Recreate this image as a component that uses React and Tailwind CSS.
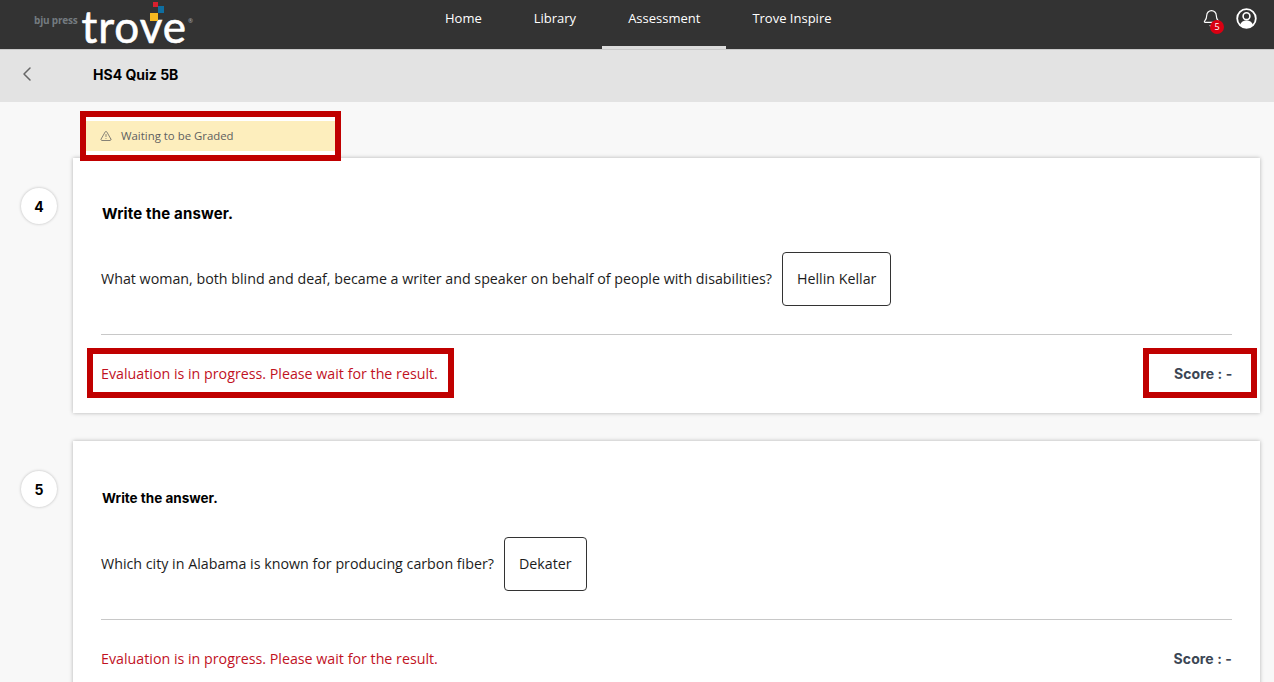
import { Bell, ChevronLeft, TriangleAlert } from "lucide-react";

const OPEN = "font-['Open_Sans',sans-serif]";
const HEAD = "font-['Inter',sans-serif]";

const NAV = [
  { label: "Home" },
  { label: "Library" },
  { label: "Assessment", active: true },
  { label: "Trove Inspire" },
];

function Logo() {
  return (
    <div className="relative flex w-[419px] items-center pl-[34px]">
      <span className={`${OPEN} mt-[-8px] text-[10px] font-bold tracking-[-0.2px] text-[#747b80]`}>bju press</span>
      <span className="ml-[4px] mt-[2px] font-['Lato',sans-serif] text-[44px] leading-[44px] tracking-[1px] text-white [-webkit-text-stroke:0.6px_white]">trove</span>
      <span className="ml-[1px] mt-[-6px] text-[6px] text-[#aaa]">®</span>
      <svg className="absolute left-[148px] top-0" width="20" height="24" viewBox="0 0 20 24">
        <rect x="5" y="2" width="5" height="5" fill="#d8202f" />
        <rect x="10" y="6" width="6" height="7" fill="#0f6ea0" />
        <rect x="2" y="13" width="8" height="8" fill="#f5b921" />
      </svg>
    </div>
  );
}

function Header() {
  return (
    <header className="flex h-[50px] items-stretch border-b border-[#c9c9c9] bg-[#333333]">
      <Logo />
      <nav className={`${OPEN} flex text-[13px] font-medium text-white`}>
        {NAV.map((item) => (
          <a
            key={item.label}
            className={`h-[49px] border-b-[3px] px-[26px] pt-[9px] ${item.active ? "border-[#dcdcdc]" : "border-transparent"}`}
          >
            {item.label}
          </a>
        ))}
      </nav>
      <div className="ml-auto flex items-start gap-[15px] pr-[17px] pt-[8px]">
        <div className="relative mt-[1px]">
          <Bell size={19} strokeWidth={1.5} className="text-white" />
          <span className={`${OPEN} absolute left-[8px] top-[11px] flex h-[14px] w-[14px] items-center justify-center rounded-full bg-[#d90012] text-[9px] text-white`}>
            5
          </span>
        </div>
        <svg width="21" height="21" viewBox="0 0 21 21">
          <circle cx="10.5" cy="10.5" r="9.3" fill="none" stroke="white" strokeWidth="1.8" />
          <circle cx="10.5" cy="8.2" r="3.4" fill="none" stroke="white" strokeWidth="1.6" />
          <path d="M4 17c1-3.4 3.4-4.6 6.5-4.6s5.500 1.200 6.500 4.600a9 9 0 0 1-13 0z" fill="white" />
        </svg>
      </div>
    </header>
  );
}

function AnswerRow({ question, answer }) {
  return (
    <div className={`${OPEN} flex items-center gap-[10px] text-[14.25px] text-[#1c1c1c]`}>
      <span>{question}</span>
      <span className="flex h-[54px] items-center rounded-[4px] border border-[#333] bg-white px-[14px]">{answer}</span>
    </div>
  );
}

function Highlight({ className, children }) {
  return <div className={`flex h-[50px] items-center border-[6px] border-[#c00000] bg-white ${className}`}>{children}</div>;
}

function Question({ num, title, titleClass, question, answer, marked, topGap, first }) {
  const message = "Evaluation is in progress. Please wait for the result.";
  return (
    <div className="flex items-start gap-[16px]">
      <div className={`${HEAD} ml-[1px] mt-[30px] flex h-[36px] w-[36px] shrink-0 items-center justify-center rounded-full bg-white text-[14px] font-bold text-black shadow-[0_0_3px_rgba(0,0,0,0.25)]`}>
        {num}
      </div>
      <div className={`flex-1 bg-white px-[28px] shadow-[0_0_4px_rgba(0,0,0,0.28)] ${first ? "h-[255px]" : "h-[300px]"}`} style={{ paddingTop: topGap }}>
        <h2 className={`${HEAD} pl-[1px] font-bold text-black ${titleClass}`}>{title}</h2>
        <div className={first ? "mt-[28px]" : "mt-[29px]"}>
          <AnswerRow question={question} answer={answer} />
        </div>
        <div className="mt-[28px] border-t border-[#c8c8c8]" />
        {marked ? (
          <div className="mt-[13px] flex justify-between">
            <Highlight className={`${OPEN} ml-[-14px] w-[367px] pl-[8px] pt-[1px] text-[14.25px] text-[#c1121f]`}>{message}</Highlight>
            <Highlight className={`${HEAD} mr-[-25px] w-[114px] pl-[25px] text-[14px] font-bold tracking-[0.1px] text-[#3b4654]`}>Score : -</Highlight>
          </div>
        ) : (
          <div className="mt-[28px] flex items-center justify-between">
            <span className={`${OPEN} text-[14.25px] text-[#c1121f]`}>{message}</span>
            <span className={`${HEAD} text-[14px] font-bold tracking-[0.1px] text-[#3b4654]`}>Score : -</span>
          </div>
        )}
      </div>
    </div>
  );
}

export default function App() {
  return (
    <div className="h-[682px] w-[1274px] overflow-hidden bg-[#f8f8f8]">
      <Header />
      <div className="flex h-[52px] items-center bg-[#e3e3e3] pb-[4px]">
        <ChevronLeft size={24} strokeWidth={1.5} className="ml-[15px] text-[#666]" />
        <span className={`${HEAD} ml-[54px] text-[14px] font-bold text-black`}>HS4 Quiz 5B</span>
      </div>
      <main className="pl-[20px] pr-[14px]">
        <div className="relative z-10 ml-[60px] mb-[-3px] mt-[9px] w-[261px]">
          <Highlight className="py-[4px]">
            <div className={`${OPEN} flex h-[30px] w-full items-center bg-[#fdeebd] pl-[14px] text-[11.4px] text-[#5f5f5f]`}>
              <TriangleAlert size={12} strokeWidth={1.5} className="mr-[9px]" />
              Waiting to be Graded
            </div>
          </Highlight>
        </div>
        <div className="flex flex-col gap-[28px]">
          <Question
            first
            marked
            num="4"
            title="Write the answer."
            titleClass="text-[15px] leading-[20px] tracking-[0.15px]"
            topGap={46}
            question="What woman, both blind and deaf, became a writer and speaker on behalf of people with disabilities?"
            answer="Hellin Kellar"
          />
          <Question
            num="5"
            title="Write the answer."
            titleClass="text-[13.5px] leading-[20px]"
            topGap={47}
            question="Which city in Alabama is known for producing carbon fiber?"
            answer="Dekater"
          />
        </div>
      </main>
    </div>
  );
}
